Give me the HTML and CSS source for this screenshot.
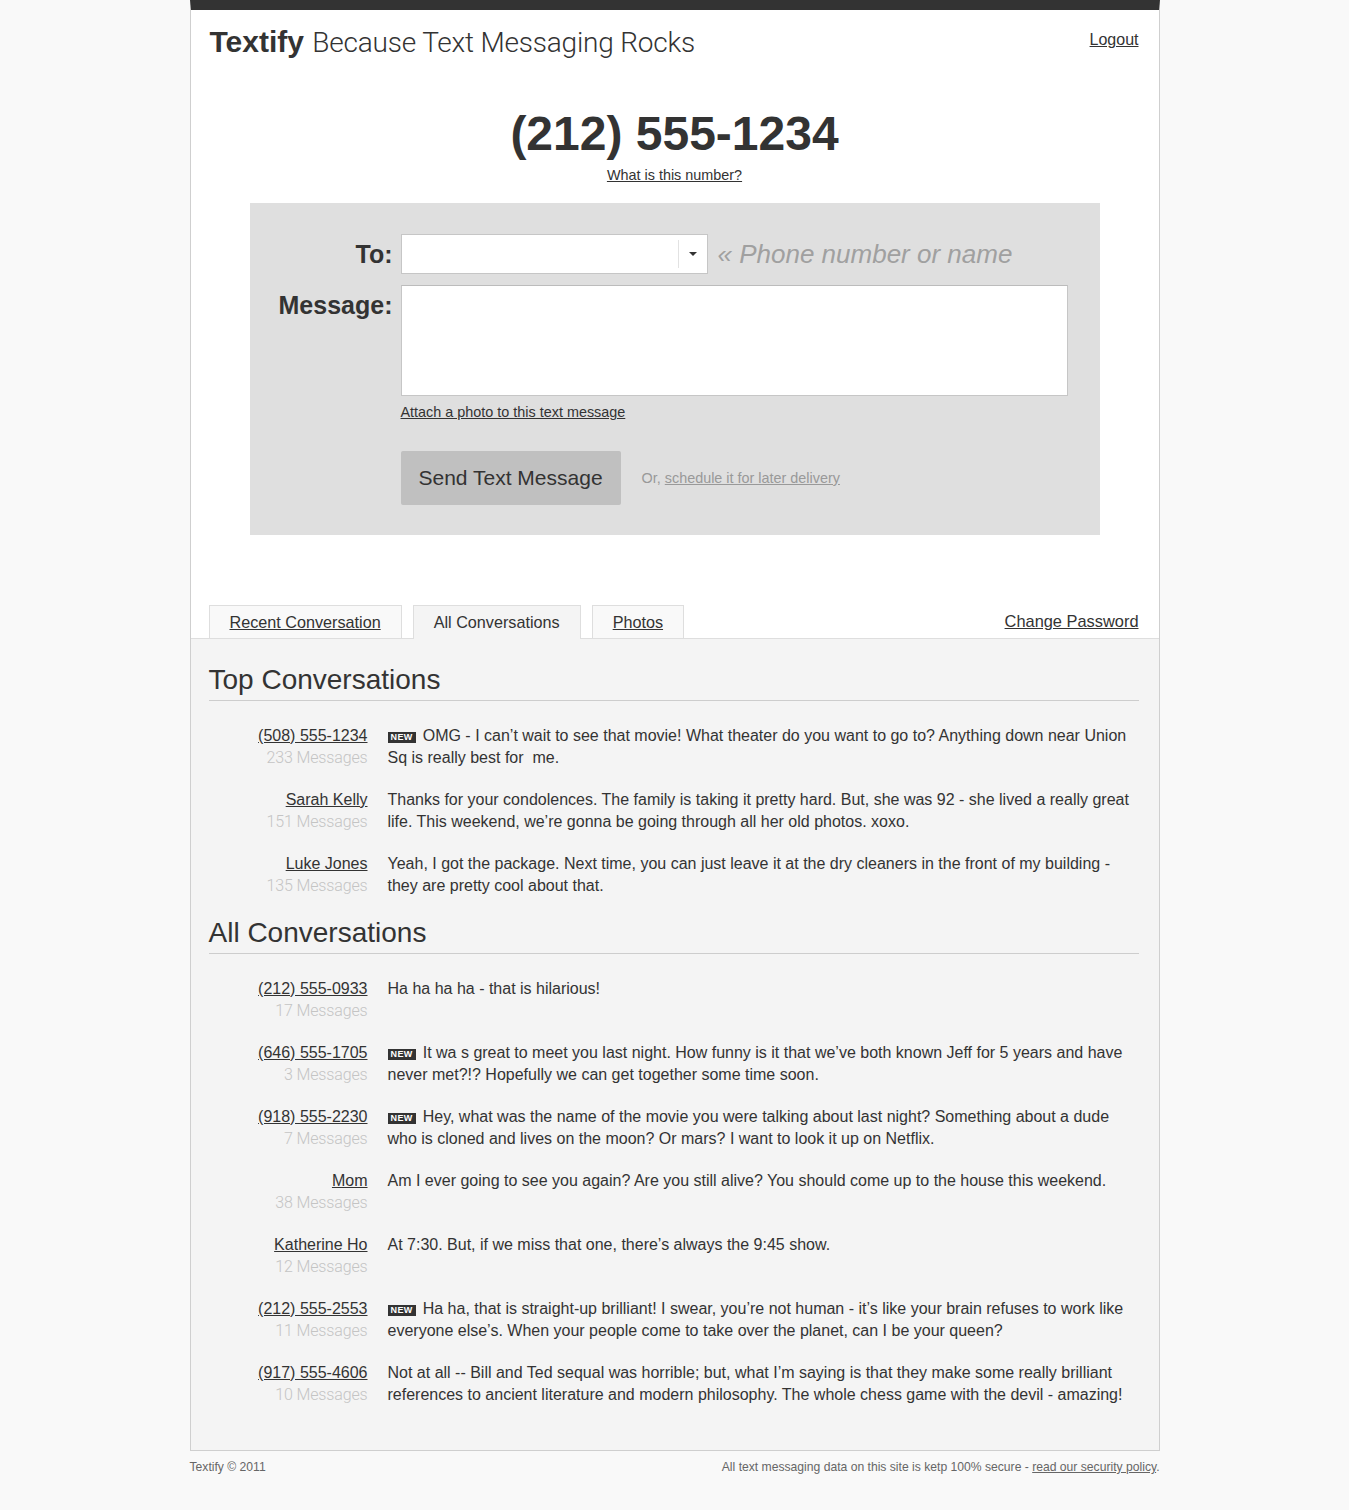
FILE: index.html
```html
<!DOCTYPE html>
<html lang="en">
<head>
<meta charset="utf-8">
<title>Textify</title>
<link rel="stylesheet" href="styles.css">
</head>
<body>
<div class="page">
  <header class="header">
    <h1 class="brand"><strong>Textify</strong> <span class="tagline">Because Text Messaging Rocks</span></h1>
    <a class="logout" href="#">Logout</a>
  </header>

  <section class="number">
    <div class="phone">(212) 555-1234</div>
    <a class="small-link" href="#">What is this number?</a>
  </section>

  <form class="compose">
    <div class="form-row">
      <label class="form-label">To:</label>
      <div class="to-field">
        <div class="select">
          <span class="select-value"></span>
          <span class="select-btn"><span class="caret"></span></span>
        </div>
        <span class="hint">« Phone number or name</span>
      </div>
    </div>
    <div class="form-row">
      <label class="form-label">Message:</label>
      <div class="msg-field">
        <div class="textarea"></div>
        <a class="small-link attach" href="#">Attach a photo to this text message</a>
      </div>
    </div>
    <div class="form-row actions">
      <span></span>
      <div class="action-line">
        <button class="send" type="button">Send Text Message</button>
        <span class="or">Or, <a href="#">schedule it for later delivery</a></span>
      </div>
    </div>
  </form>

  <nav class="tabs">
    <a class="tab" href="#">Recent Conversation</a>
    <span class="tab active">All Conversations</span>
    <a class="tab" href="#">Photos</a>
    <a class="change-pw" href="#">Change Password</a>
  </nav>

  <section class="panel">
    <h2 class="section-title">Top Conversations</h2>
    <div class="convs">
      <div class="conv">
        <div class="who"><a href="#">(508) 555-1234</a><span class="count">233 Messages</span></div>
        <p class="msg"><span class="new">NEW</span>OMG - I can’t wait to see that movie! What theater do you want to go to? Anything down near Union Sq is really best for&nbsp; me.</p>
      </div>
      <div class="conv">
        <div class="who"><a href="#">Sarah Kelly</a><span class="count">151 Messages</span></div>
        <p class="msg">Thanks for your condolences. The family is taking it pretty hard. But, she was 92 - she lived a really great life. This weekend, we’re gonna be going through all her old photos. xoxo.</p>
      </div>
      <div class="conv">
        <div class="who"><a href="#">Luke Jones</a><span class="count">135 Messages</span></div>
        <p class="msg">Yeah, I got the package. Next time, you can just leave it at the dry cleaners in the front of my building - they are pretty cool about that.</p>
      </div>
    </div>

    <h2 class="section-title">All Conversations</h2>
    <div class="convs">
      <div class="conv">
        <div class="who"><a href="#">(212) 555-0933</a><span class="count">17 Messages</span></div>
        <p class="msg">Ha ha ha ha - that is hilarious!</p>
      </div>
      <div class="conv">
        <div class="who"><a href="#">(646) 555-1705</a><span class="count">3 Messages</span></div>
        <p class="msg"><span class="new">NEW</span>It wa s great to meet you last night. How funny is it that we’ve both known Jeff for 5 years and have never met?!? Hopefully we can get together some time soon.</p>
      </div>
      <div class="conv">
        <div class="who"><a href="#">(918) 555-2230</a><span class="count">7 Messages</span></div>
        <p class="msg"><span class="new">NEW</span>Hey, what was the name of the movie you were talking about last night? Something about a dude who is cloned and lives on the moon? Or mars? I want to look it up on Netflix.</p>
      </div>
      <div class="conv">
        <div class="who"><a href="#">Mom</a><span class="count">38 Messages</span></div>
        <p class="msg">Am I ever going to see you again? Are you still alive? You should come up to the house this weekend.</p>
      </div>
      <div class="conv">
        <div class="who"><a href="#">Katherine Ho</a><span class="count">12 Messages</span></div>
        <p class="msg">At 7:30. But, if we miss that one, there’s always the 9:45 show.</p>
      </div>
      <div class="conv">
        <div class="who"><a href="#">(212) 555-2553</a><span class="count">11 Messages</span></div>
        <p class="msg"><span class="new">NEW</span>Ha ha, that is straight-up brilliant! I swear, you’re not human - it’s like your brain refuses to work like everyone else’s. When your people come to take over the planet, can I be your queen?</p>
      </div>
      <div class="conv">
        <div class="who"><a href="#">(917) 555-4606</a><span class="count">10 Messages</span></div>
        <p class="msg">Not at all -- Bill and Ted sequal was horrible; but, what I’m saying is that they make some really brilliant references to ancient literature and modern philosophy. The whole chess game with the devil - amazing!</p>
      </div>
    </div>
  </section>
</div>

<footer class="footer">
  <span>Textify © 2011</span>
  <span>All text messaging data on this site is ketp 100% secure - <a href="#">read our security policy</a>.</span>
</footer>
</body>
</html>
```

FILE: styles.css
```css
* { box-sizing: border-box; }

body {
  margin: 0;
  background: #f9f9f9;
  color: #333;
  font-family: "Liberation Sans", Arial, sans-serif;
}

a { color: #333; text-decoration: underline; }

.page {
  width: 970px;
  margin: 0 auto;
  background: #fff;
  border: 1px solid #cfcfcf;
  border-top: 10px solid #333;
}

/* header */
.header {
  display: flex;
  justify-content: space-between;
  align-items: flex-start;
  padding: 15px 20px 0 19px;
}
.brand {
  margin: 0;
  font-size: 30px;
  line-height: 34px;
  font-weight: normal;
  color: #333;
}
.brand strong { font-weight: bold; }
.tagline {
  font-family: Roboto, "Liberation Sans", sans-serif;
  font-weight: 300;
  font-size: 28px;
  letter-spacing: -0.2px;
  color: #333;
}
.logout {
  margin-top: 5px;
  font-size: 16px;
  line-height: 20px;
}

/* number */
.number {
  text-align: center;
  padding-top: 46px;
}
.phone {
  font-size: 48px;
  line-height: 56px;
  font-weight: bold;
  color: #333;
}
.small-link {
  display: inline-block;
  margin-top: 5px;
  font-size: 14.4px;
  line-height: 17px;
}

/* compose form */
.compose {
  width: 850px;
  margin: 19px auto 0;
  background: #dfdfdf;
  padding: 31px 31px 30px 0;
}
.form-row {
  display: grid;
  grid-template-columns: 143px 1fr;
  column-gap: 8px;
  margin-bottom: 11px;
}
.form-row.actions { margin-bottom: 0; margin-top: 30px; }
.form-label {
  text-align: right;
  font-size: 25px;
  font-weight: bold;
  line-height: 40px;
  color: #333;
}
.to-field {
  display: flex;
  align-items: center;
}
.select {
  width: 307px;
  height: 40px;
  background: #fff;
  border: 1px solid #c6c6c6;
  display: flex;
  align-items: center;
}
.select-value { flex: 1; }
.select-btn {
  width: 29px;
  height: 28px;
  border-left: 1px solid #e2e2e2;
  display: flex;
  align-items: center;
  justify-content: center;
}
.caret {
  width: 0;
  height: 0;
  border-left: 4px solid transparent;
  border-right: 4px solid transparent;
  border-top: 4px solid #333;
}
.hint {
  margin-left: 10px;
  font-size: 26px;
  font-style: italic;
  color: #a0a0a0;
  line-height: 40px;
}
.msg-field { display: flex; flex-direction: column; align-items: flex-start; }
.textarea {
  width: 667px;
  height: 111px;
  background: #fff;
  border: 1px solid #c6c6c6;
  border-top-color: #bcbcbc;
}
.attach { margin-top: 8px; }
.action-line {
  display: flex;
  align-items: center;
}
.send {
  height: 54px;
  padding: 0 18px;
  background: #c0c0c0;
  border: none;
  border-radius: 2px;
  font-family: "Liberation Sans", Arial, sans-serif;
  font-size: 21px;
  color: #333;
}
.or {
  margin-left: 21px;
  font-size: 14.4px;
  color: #999;
}
.or a { color: #999; }

/* tabs */
.tabs {
  display: flex;
  align-items: flex-end;
  margin-top: 70px;
  padding: 0 20px 0 18px;
  gap: 11px;
}
.tab {
  display: block;
  height: 33px;
  padding: 0 20px;
  line-height: 33px;
  font-size: 16.2px;
  background: #f9f9f9;
  border: 1px solid #dedede;
  border-bottom: none;
  color: #333;
}
.tab.active {
  background: #f4f4f4;
  margin-bottom: -1px;
  height: 34px;
  position: relative;
}
.change-pw {
  margin-left: auto;
  font-size: 16.4px;
  line-height: 33px;
}

/* panel */
.panel {
  background: #f4f4f4;
  border-top: 1px solid #dedede;
  padding: 24px 20px 24px 18px;
}
.section-title {
  margin: 0;
  font-size: 28px;
  line-height: 34px;
  font-weight: normal;
  color: #333;
  padding-bottom: 3px;
  border-bottom: 1px solid #cdcdcd;
}
.convs { padding-top: 24px; }
.conv {
  display: grid;
  grid-template-columns: 159px 1fr;
  column-gap: 20px;
  margin-bottom: 20px;
  font-size: 16px;
  line-height: 22px;
}
.convs + .section-title { margin-top: -1px; }
.who {
  display: flex;
  flex-direction: column;
  align-items: flex-end;
  text-align: right;
}
.count {
  font-family: Roboto, "Liberation Sans", sans-serif;
  font-weight: 300;
  color: #c4c4c4;
  letter-spacing: -0.15px;
}
.msg {
  margin: 0;
  color: #333;
}
.new {
  display: inline-block;
  vertical-align: 1px;
  background: #333;
  color: #fff;
  font-size: 9px;
  font-weight: bold;
  line-height: 11px;
  padding: 0 3px;
  letter-spacing: 0.4px;
  margin-right: 7px;
}

/* footer */
.footer {
  width: 970px;
  margin: 0 auto;
  display: flex;
  justify-content: space-between;
  padding: 9px 0 40px;
  font-size: 12.15px;
  line-height: 15px;
  color: #666;
}
.footer a { color: #666; }
```
